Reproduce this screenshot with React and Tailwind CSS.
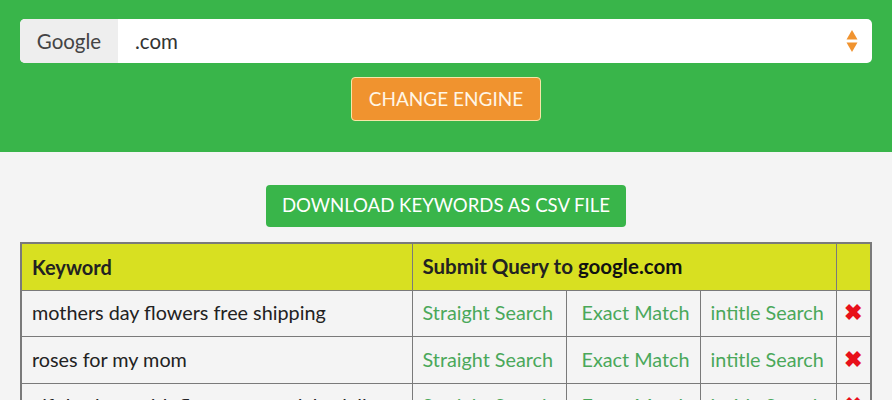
import React from 'react';

const rows = [
    'mothers day flowers free shipping',
    'roses for my mom',
    'gift baskets with flowers overnight delivery',
];

const App = () => {
    return (
        <div className="min-h-screen bg-[#f4f4f4] font-['Lato','Open_Sans',sans-serif]">
            {/* Engine picker */}
            <div className="bg-[#39b54a] px-5 pt-[19px] pb-[31px]">
                <div className="flex h-[44px] rounded-[5px] bg-white overflow-hidden">
                    <div className="w-[98px] flex items-center justify-center bg-[#eeeeee] text-[20.5px] text-[#444]">Google</div>
                    <div className="flex-1 flex items-center pl-[17px] text-[20.5px] text-[#333]">.com</div>
                    <div className="w-[40px] flex flex-col items-center justify-center gap-[2px]">
                        <svg width="12" height="24" viewBox="0 0 12 24">
                            <path d="M6 1 L11.5 10.5 L0.5 10.5 Z" fill="#f0932f" />
                            <path d="M0.5 13.5 L11.5 13.5 L6 23 Z" fill="#f0932f" />
                        </svg>
                    </div>
                </div>
                <div className="flex justify-center mt-[14px]">
                    <button className="h-[44px] px-[17px] rounded-[4px] border border-[#f7e6a8] bg-[#f0932f] text-[19px] text-[#fff6e6] uppercase">
                        Change Engine
                    </button>
                </div>
            </div>

            {/* Results */}
            <div className="px-5 pt-[33px]">
                <div className="flex justify-center">
                    <button className="h-[42px] px-[16px] rounded-[4px] bg-[#39b54a] text-[18.6px] text-white uppercase">
                        Download keywords as CSV file
                    </button>
                </div>
                <table className="mt-[15px] w-full table-fixed border-collapse border-2 border-[#7a7a7a] text-[19.8px]">
                    <colgroup>
                        <col className="w-[391px]" />
                        <col className="w-[154px]" />
                        <col className="w-[134px]" />
                        <col className="w-[136px]" />
                        <col />
                    </colgroup>
                    <thead>
                        <tr className="h-[47px] bg-[#d8e021] text-left text-[#222]">
                            <th className="px-[10px] border border-[#7a7a7a] font-bold text-[20px]">Keyword</th>
                            <th colSpan={3} className="px-[10px] border border-[#7a7a7a] font-bold text-[20.5px]">
                                Submit Query to <span className="text-[#111]">google.com</span>
                            </th>
                            <th className="border border-[#7a7a7a]"></th>
                        </tr>
                    </thead>
                    <tbody>
                        {rows.map((kw) => (
                            <tr key={kw} className="h-[46.5px] bg-[#f4f4f4]">
                                <td className="px-[10px] border border-[#7a7a7a] text-[#222] whitespace-nowrap overflow-hidden">{kw}</td>
                                <td className="pl-[10px] border border-[#7a7a7a] text-[#4aa85a] whitespace-nowrap">Straight Search</td>
                                <td className="pl-[15px] border border-[#7a7a7a] text-[#4aa85a] whitespace-nowrap">Exact Match</td>
                                <td className="pl-[10px] border border-[#7a7a7a] text-[#4aa85a] whitespace-nowrap">intitle Search</td>
                                <td className="border border-[#7a7a7a] text-center">
                                    <span className="text-[22px] font-bold text-[#e8101a] leading-none">✖</span>
                                </td>
                            </tr>
                        ))}
                    </tbody>
                </table>
            </div>
        </div>
    );
};

export default App;
